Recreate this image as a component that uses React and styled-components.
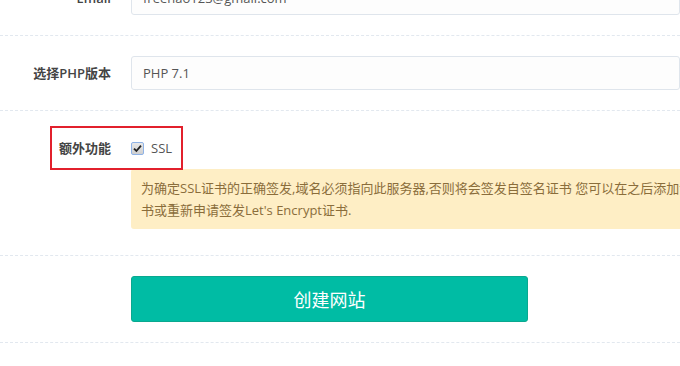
import styled, { createGlobalStyle } from 'styled-components';

const GlobalStyle = createGlobalStyle`
    html, body {
        margin:0;
        padding:0;
        background:#fff;
        overflow:hidden;
    }
    body {
        font-family: "Open Sans", "Noto Sans CJK SC", sans-serif;
        font-size:13px;
        color:#555;
    }
`

const Form = styled.div`
    width:680px;
    height:366px;
    overflow:hidden;
`
const Rows = styled.div`
    margin-top:-39px;
`
const Row = styled.div`
    position:relative;
    display:flex;
    align-items:flex-start;
    padding:20px 0 ${props => props.bottom || 20}px;
    border-bottom:1px dashed #e2e8ef;
`
const Label = styled.label`
    flex:0 0 111px;
    height:34px;
    line-height:34px;
    text-align:right;
    font-weight:600;
    color:#444;
    margin-right:20px;
`
const Field = styled.div`
    display:flex;
    flex-direction:column;
    gap:4px;
`
const Input = styled.div`
    box-sizing:border-box;
    width:600px;
    height:34px;
    line-height:32px;
    padding:0 11px;
    border:1px solid #dfe5ec;
    border-radius:3px;
    background:#fdfdfd;
    color:#555;
`
const CheckLine = styled.div`
    display:flex;
    align-items:center;
    gap:7px;
    height:34px;
`
const Box = styled.span`
    box-sizing:border-box;
    width:13px;
    height:13px;
    display:flex;
    align-items:center;
    justify-content:center;
    border:1px solid #8eb2e6;
    border-radius:2px;
    background:linear-gradient(#e8e8e8, #cfcfcf);
`
const Alert = styled.div`
    box-sizing:border-box;
    width:575px;
    padding:8px 10px;
    line-height:22px;
    font-size:13px;
    background:#feeec5;
    color:#8a6d3b;
    border-radius:3px;
`
const Highlight = styled.div`
    position:absolute;
    left:50px;
    top:15px;
    width:133px;
    height:44px;
    box-sizing:border-box;
    border:2px solid #e2202c;
`
const Spacer = styled.div`
    flex:0 0 131px;
`
const Button = styled.button`
    box-sizing:border-box;
    width:397px;
    height:46px;
    border:1px solid #0aa88f;
    border-radius:3px;
    background:#00bca4;
    color:#fff;
    font-family:"Noto Sans CJK SC", sans-serif;
    font-size:18px;
    cursor:pointer;
`

const App = () => {
    return(
        <Form>
            <GlobalStyle/>
            <Rows>
                <Row>
                    <Label>Email</Label>
                    <Input>freehao123@gmail.com</Input>
                </Row>
                <Row>
                    <Label>选择PHP版本</Label>
                    <Input>PHP 7.1</Input>
                </Row>
                <Row bottom={26}>
                    <Label>额外功能</Label>
                    <Field>
                        <CheckLine>
                            <Box>
                                <svg width="9" height="9" viewBox="0 0 9 9">
                                    <path d="M1 4.6 L3.4 7 L8 1.6" fill="none" stroke="#222" strokeWidth="1.8"/>
                                </svg>
                            </Box>
                            SSL
                        </CheckLine>
                        <Alert>
                            为确定SSL证书的正确签发,域名必须指向此服务器,否则将会签发自签名证书 您可以在之后添加证书或重新申请签发Let's Encrypt证书.
                        </Alert>
                    </Field>
                    <Highlight/>
                </Row>
                <Row>
                    <Spacer/>
                    <Button>创建网站</Button>
                </Row>
            </Rows>
        </Form>
    )
}

export default App;
